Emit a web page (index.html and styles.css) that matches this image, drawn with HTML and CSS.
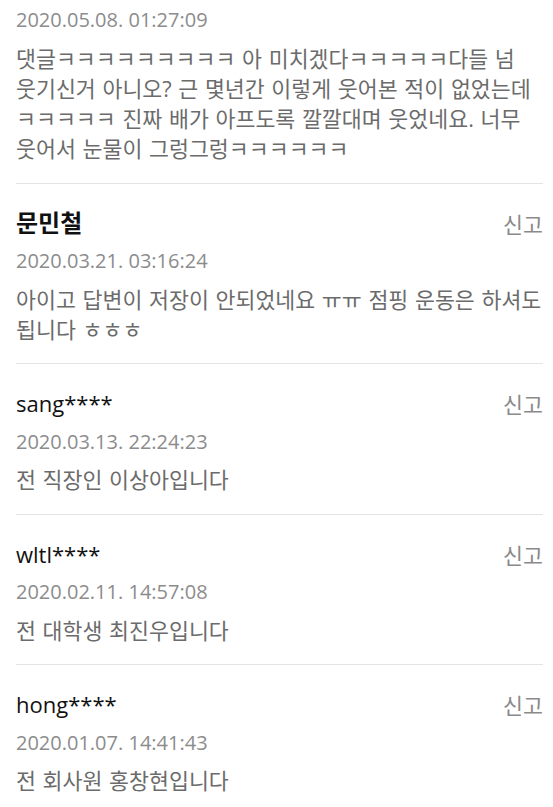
FILE: index.html
```html
<!DOCTYPE html>
<html lang="ko">
<head>
<meta charset="utf-8">
<title>댓글</title>
<link rel="stylesheet" href="styles.css">
</head>
<body>
<div class="list">
  <div class="comment first">
    <div class="date">2020.05.08. 01:27:09</div>
    <p class="text">댓글ㅋㅋㅋㅋㅋㅋㅋㅋㅋ 아 미치겠다ㅋㅋㅋㅋㅋ다들 넘 웃기신거 아니오? 근 몇년간 이렇게 웃어본 적이 없었는데 ㅋㅋㅋㅋㅋ 진짜 배가 아프도록 깔깔대며 웃었네요. 너무 웃어서 눈물이 그렁그렁ㅋㅋㅋㅋㅋㅋ</p>
  </div>
  <div class="comment">
    <div class="head">
      <span class="name name-ko">문민철</span>
      <span class="report">신고</span>
    </div>
    <div class="date">2020.03.21. 03:16:24</div>
    <p class="text">아이고 답변이 저장이 안되었네요 ㅠㅠ 점핑 운동은 하셔도 됩니다 ㅎㅎㅎ</p>
  </div>
  <div class="comment">
    <div class="head">
      <span class="name">sang****</span>
      <span class="report">신고</span>
    </div>
    <div class="date">2020.03.13. 22:24:23</div>
    <p class="text">전 직장인 이상아입니다</p>
  </div>
  <div class="comment">
    <div class="head">
      <span class="name">wltl****</span>
      <span class="report">신고</span>
    </div>
    <div class="date">2020.02.11. 14:57:08</div>
    <p class="text">전 대학생 최진우입니다</p>
  </div>
  <div class="comment">
    <div class="head">
      <span class="name">hong****</span>
      <span class="report">신고</span>
    </div>
    <div class="date">2020.01.07. 14:41:43</div>
    <p class="text">전 회사원 홍창현입니다</p>
  </div>
</div>
</body>
</html>
```
FILE: styles.css
```css
html, body {
  margin: 0;
  padding: 0;
  background: #ffffff;
}

body {
  font-family: "Open Sans", "Noto Sans CJK KR", sans-serif;
  -webkit-font-smoothing: antialiased;
}

.list {
  padding: 5px 10px 0 16px;
}

.comment {
  padding: 24px 0 18.5px;
  border-top: 1px solid #e4e4e4;
  display: flex;
  flex-direction: column;
  gap: 8.5px;
}

.comment.first {
  padding-top: 0;
  padding-bottom: 19px;
  border-top: none;
}

.head {
  display: flex;
  justify-content: space-between;
  align-items: center;
  height: 30px;
}

.name {
  font-size: 22px;
  line-height: 30px;
  color: #111111;
  font-weight: 400;
}

.name-ko {
  font-size: 24px;
  font-weight: 700;
}

.report {
  font-size: 21.7px;
  line-height: 30px;
  color: #8a8a8a;
  margin-top: 4px;
}

.date {
  font-size: 20px;
  line-height: 30px;
  color: #8c8c8c;
}

.text {
  margin: 0;
  font-size: 21.7px;
  line-height: 30px;
  color: #6b6b6b;
  word-break: keep-all;
  word-spacing: 1px;
}
```
